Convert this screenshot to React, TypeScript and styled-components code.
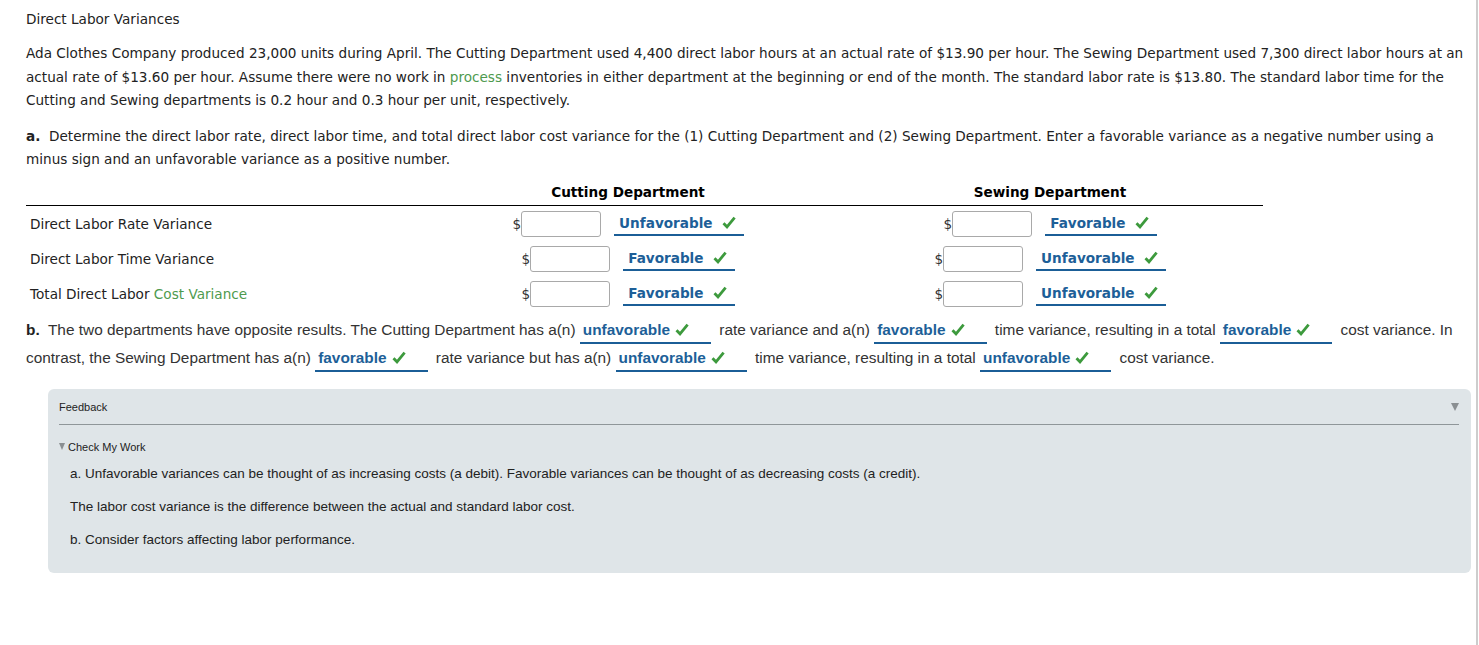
import React, { FC } from 'react'
import styled, { createGlobalStyle } from 'styled-components'

const GlobalStyle = createGlobalStyle`
  html, body {
    margin: 0;
    padding: 0;
    background: #fff;
  }
`

type Answer = { text: string }

const Check: FC = () => (
  <svg width="14" height="13" viewBox="0 0 14 13">
    <path d="M1.5 7.2 L5 10.8 L12.6 1.6" fill="none" stroke="#3d9a3d" strokeWidth="2.8" strokeLinejoin="miter" />
  </svg>
)

const Choice: FC<Answer & { inline?: boolean }> = ({ text, inline }) => (
  <Picked $inline={inline}>
    {text}
    <Check />
  </Picked>
)

const AmountCell: FC<{ answer: string }> = ({ answer }) => (
  <Cell>
    <Dollar>$</Dollar>
    <Amount type="text" />
    <Choice text={answer} />
  </Cell>
)

const App: FC = () => {
  const rows: { label: React.ReactNode; cut: string; sew: string }[] = [
    { label: 'Direct Labor Rate Variance', cut: 'Unfavorable', sew: 'Favorable' },
    { label: 'Direct Labor Time Variance', cut: 'Favorable', sew: 'Unfavorable' },
    {
      label: (
        <>
          Total Direct Labor <Term>Cost Variance</Term>
        </>
      ),
      cut: 'Favorable',
      sew: 'Unfavorable',
    },
  ]

  return (
    <Page>
      <GlobalStyle />
      <Title>Direct Labor Variances</Title>
      <Para>
        Ada Clothes Company produced 23,000 units during April. The Cutting Department used 4,400 direct labor hours
        at an actual rate of $13.90 per hour. The Sewing Department used 7,300 direct labor hours at an actual rate of
        $13.60 per hour. Assume there were no work in <Term>process</Term> inventories in either department at the
        beginning or end of the month. The standard labor rate is $13.80. The standard labor time for the Cutting and
        Sewing departments is 0.2 hour and 0.3 hour per unit, respectively.
      </Para>
      <Para>
        <b>a.</b>&nbsp; Determine the direct labor rate, direct labor time, and total direct labor cost variance for the
        (1) Cutting Department and (2) Sewing Department. Enter a favorable variance as a negative number using a minus
        sign and an unfavorable variance as a positive number.
      </Para>

      <Table>
        <HeadRow>
          <span />
          <HeadCell>Cutting Department</HeadCell>
          <HeadCell>Sewing Department</HeadCell>
        </HeadRow>
        {rows.map((r, i) => (
          <Row key={i}>
            <Label>{r.label}</Label>
            <AmountCell answer={r.cut} />
            <AmountCell answer={r.sew} />
          </Row>
        ))}
      </Table>

      <PartB>
        <b>b.</b>&nbsp; The two departments have opposite results. The Cutting Department has a(n){' '}
        <Choice inline text="unfavorable" /> rate variance and a(n) <Choice inline text="favorable" /> time variance,
        resulting in a total <Choice inline text="favorable" /> cost variance. In contrast, the Sewing Department has
        a(n) <Choice inline text="favorable" /> rate variance but has a(n) <Choice inline text="unfavorable" /> time
        variance, resulting in a total <Choice inline text="unfavorable" /> cost variance.
      </PartB>

      <Feedback>
        <FeedbackHead>
          <span>Feedback</span>
          <Caret $size={6} />
        </FeedbackHead>
        <CheckTitle>
          <Caret $size={5} />
          Check My Work
        </CheckTitle>
        <Hint>
          a. Unfavorable variances can be thought of as increasing costs (a debit). Favorable variances can be thought
          of as decreasing costs (a credit).
        </Hint>
        <Hint>The labor cost variance is the difference between the actual and standard labor cost.</Hint>
        <Hint>b. Consider factors affecting labor performance.</Hint>
      </Feedback>
    </Page>
  )
}

export default App

const Page = styled.div`
  box-sizing: border-box;
  width: 1478px;
  min-height: 645px;
  padding: 10px 5px 20px 26px;
  border-right: 2px solid #cdcdcd;
  font-family: 'DejaVu Sans', Verdana, sans-serif;
  font-size: 13.6px;
  color: #222;
`

const Title = styled.div`
  line-height: 18px;
  margin-bottom: 14px;
`

const Para = styled.p`
  margin: 0 0 12px;
  line-height: 23.5px;
`

const Term = styled.span`
  color: #4e9a4e;
`

const Table = styled.div`
  width: 1237px;
`

const HeadRow = styled.div`
  display: grid;
  grid-template-columns: 393px 418px 426px;
  align-items: end;
  height: 21px;
  border-bottom: 1px solid #000;
`

const HeadCell = styled.div`
  text-align: center;
  font-weight: bold;
  color: #000;
  line-height: 16px;
  padding-bottom: 6px;
`

const Row = styled.div`
  display: grid;
  grid-template-columns: 393px 418px 426px;
  align-items: center;
  height: 35px;

  &:nth-child(2) {
    margin-top: 1px;
  }
`

const Label = styled.div`
  padding-left: 4px;
  color: #222;
`

const Cell = styled.div`
  display: flex;
  align-items: center;
  justify-content: center;
`

const Dollar = styled.span`
  color: #333;
`

const Amount = styled.input`
  box-sizing: border-box;
  width: 80px;
  height: 26px;
  border: 1px solid #a9a9a9;
  border-radius: 3px;
  margin: 0 13px 0 0;
`

const Picked = styled.span<{ $inline?: boolean }>`
  display: inline-flex;
  align-items: center;
  gap: ${(p) => (p.$inline ? '5px' : '9px')};
  padding: ${(p) => (p.$inline ? '0 22px 2px 3px' : '0 8px 1px 5px')};
  margin: ${(p) => (p.$inline ? '0 4px 0 0' : '0')};
  border-bottom: 2px solid #1b5e97;
  color: #1d5f98;
  font-weight: bold;
  line-height: 20px;
`

const PartB = styled.div`
  font-family: 'Liberation Sans Narrow', 'Arial Narrow', 'Liberation Sans', sans-serif;
  font-size: 15.4px;
  line-height: 27px;
  color: #333;
  margin-top: 4px;
  width: 1440px;

  b {
    color: #222;
  }
`

const Feedback = styled.div`
  margin: 17px 0 0 22px;
  padding: 10px 12px 8px 11px;
  background: #dfe5e8;
  border-radius: 6px;
  font-family: 'Liberation Sans', Arial, sans-serif;
  color: #222;
`

const FeedbackHead = styled.div`
  display: flex;
  justify-content: space-between;
  align-items: center;
  font-size: 11px;
  height: 16px;
  padding-bottom: 9px;
  margin-bottom: 16px;
  border-bottom: 1px solid #8f9699;
`

const Caret = styled.span<{ $size: number }>`
  display: inline-block;
  width: 0;
  height: 0;
  border-left: ${(p) => p.$size * 0.7}px solid transparent;
  border-right: ${(p) => p.$size * 0.7}px solid transparent;
  border-top: ${(p) => p.$size * 1.4}px solid #8a8f92;
  margin-right: ${(p) => (p.$size > 5 ? '0' : '3px')};
`

const CheckTitle = styled.div`
  display: flex;
  align-items: center;
  font-size: 11px;
  margin-bottom: 13px;
`

const Hint = styled.p`
  margin: 0 0 17px 11px;
  font-size: 13.5px;
  line-height: 16px;
`
